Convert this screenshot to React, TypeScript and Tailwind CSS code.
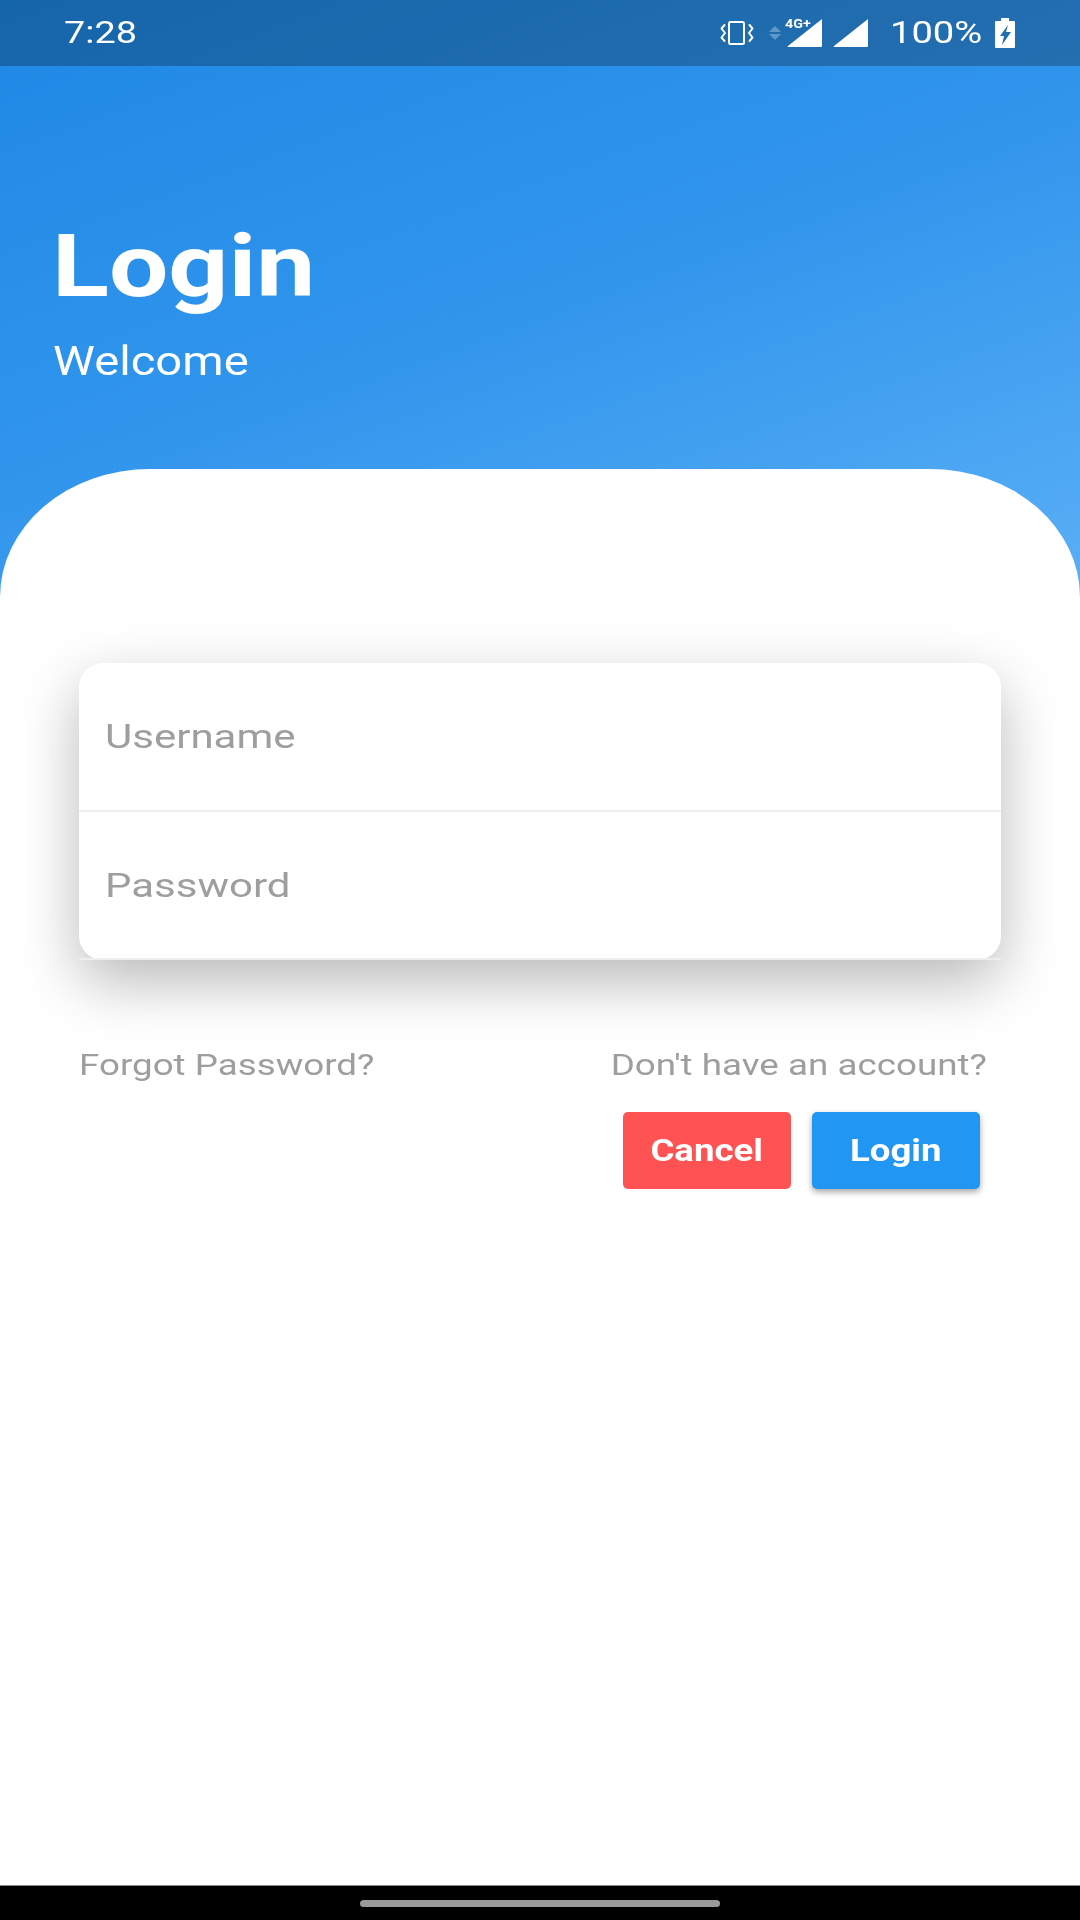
export default function App() {
  return (
    <div className="w-[1080px] h-[1920px] flex flex-col bg-white overflow-hidden font-['Roboto',sans-serif]">
      <div className="bg-linear-[160deg] from-[#1e88e5] via-[#3195ec] via-50% to-[#5aaff6]">
        <div className="h-[66px] bg-black/25 flex items-center text-white">
          <span className="ml-[64px] text-[31px] leading-[36px] origin-left scale-x-[1.22] will-change-transform">7:28</span>
          <div className="ml-auto flex items-center">
            <svg width="36" height="30" viewBox="0 0 36 30" fill="none" stroke="white" strokeWidth="2" strokeLinejoin="round" strokeLinecap="round">
              <rect x="10" y="4" width="15" height="22" rx="1.5" />
              <path d="M5.5 7 L2.5 10.5 L6 15 L2.5 19.5 L5.5 23" />
              <path d="M30.5 7 L33.5 10.5 L30 15 L33.5 19.5 L30.5 23" />
            </svg>
            <svg className="ml-[14px]" width="12" height="14" viewBox="0 0 12 14" fill="white" opacity="0.3">
              <path d="M6 0 L12 6 H0 Z" />
              <path d="M0 8 H12 L6 14 Z" />
            </svg>
            <div className="relative ml-[6px] w-[35px] h-[28px]">
              <svg width="35" height="28" viewBox="0 0 35 28" fill="white">
                <path d="M35 0 V27 Q35 28 34 28 H1 Q0 28 1 27 Z" />
              </svg>
              <span className="absolute left-[-2px] top-[-2px] text-[13px] leading-[13px] font-bold origin-left scale-x-[1.1] will-change-transform">4G+</span>
            </div>
            <svg className="ml-[11px]" width="35" height="28" viewBox="0 0 35 28" fill="white">
              <path d="M35 0 V27 Q35 28 34 28 H1 Q0 28 1 27 Z" />
            </svg>
            <span className="ml-[22px] w-[90px] text-[31px] leading-[36px] origin-left scale-x-[1.23] will-change-transform">100%</span>
            <svg className="ml-[15px] mr-[65px]" width="20" height="30" viewBox="0 0 20 30" fill="white">
              <path fillRule="evenodd" d="M6 0 H14 V3 H19 Q20 3 20 4 V29 Q20 30 19 30 H1 Q0 30 0 29 V4 Q0 3 1 3 H6 Z M13 7 L5 18 H9 L7 27 L16 14 H11 Z" />
            </svg>
          </div>
        </div>
        <div className="h-[403px] pl-[52px] pt-[150px]">
          <div className="text-[87px] leading-[100px] font-bold text-white origin-left scale-x-[1.21] will-change-transform">Login</div>
          <div className="ml-[1px] mt-[22px] text-[40px] leading-[48px] text-white origin-left scale-x-[1.18] will-change-transform">Welcome</div>
        </div>
        <div className="h-[128px] bg-white rounded-tl-[150px_128px] rounded-tr-[150px_128px]" />
      </div>
      <div className="flex-1 flex flex-col px-[79px] pt-[66px]">
        <div className="bg-white rounded-[24px] shadow-[0_22px_60px_rgba(0,0,0,0.28)] h-[297px] flex flex-col">
          <div className="h-[150px] border-b-2 border-[#eeeeee] flex items-center pl-[26px]">
            <span className="text-[34px] text-[#9e9e9e] origin-left scale-x-[1.235] will-change-transform">Username</span>
          </div>
          <div className="h-[149px] border-b-2 border-[#eeeeee] flex items-center pl-[26px]">
            <span className="text-[34px] text-[#9e9e9e] origin-left scale-x-[1.235] will-change-transform">Password</span>
          </div>
        </div>
        <div className="mt-[87px] flex justify-between">
          <span className="text-[30px] leading-[36px] text-[#9e9e9e] origin-left scale-x-[1.225] will-change-transform">Forgot Password?</span>
          <span className="mr-[14px] text-[30px] leading-[36px] text-[#9e9e9e] origin-right scale-x-[1.226] will-change-transform">Don't have an account?</span>
        </div>
        <div className="mt-[29px] flex justify-end gap-[21px] pr-[21px]">
          <button className="w-[168px] h-[77px] pt-[2px] rounded-[5px] bg-[#ff5252] text-white font-bold text-[31px]">
            <span className="inline-block scale-x-[1.18] will-change-transform">Cancel</span>
          </button>
          <button className="w-[168px] h-[77px] pt-[2px] rounded-[5px] bg-[#2196f3] text-white font-bold text-[31px] shadow-[0_3px_6px_rgba(0,0,0,0.35)]">
            <span className="inline-block scale-x-[1.18] will-change-transform">Login</span>
          </button>
        </div>
      </div>
      <div className="h-[35px] bg-black border-t border-[#888888] flex items-center justify-center">
        <div className="w-[360px] h-[7px] rounded-full bg-[#999999]" />
      </div>
    </div>
  );
}
